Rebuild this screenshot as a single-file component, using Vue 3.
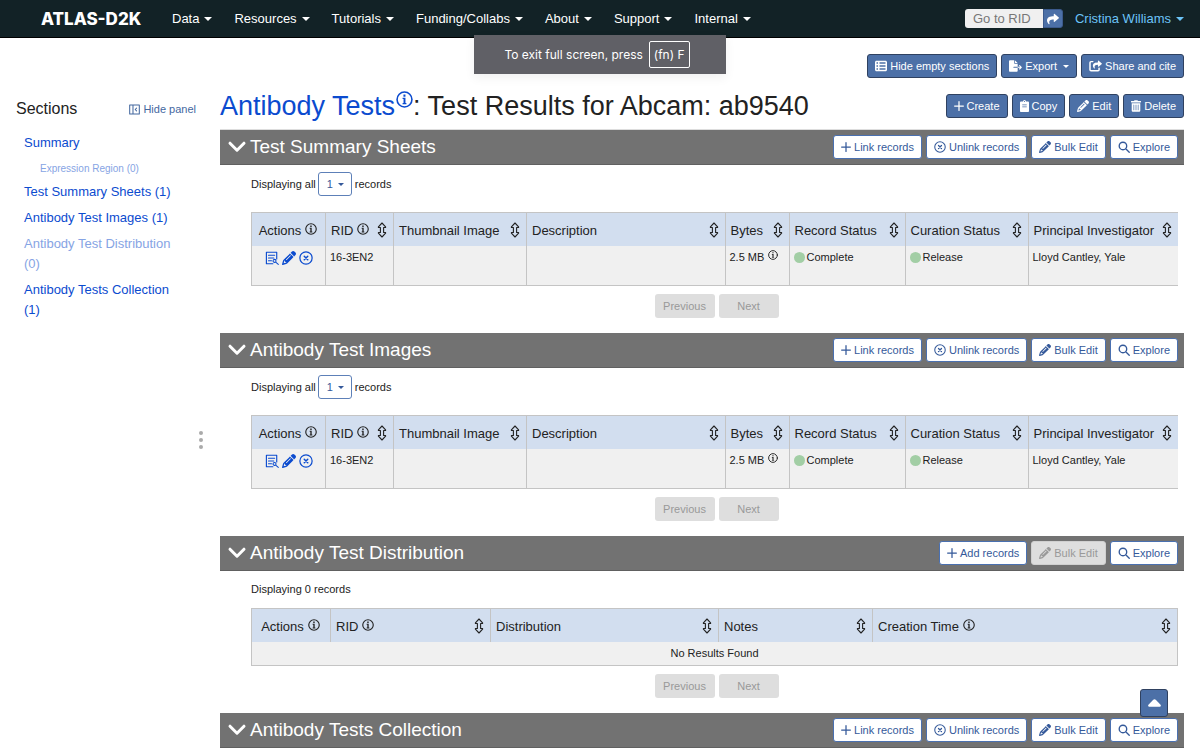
<script setup>
import { h, ref } from 'vue'

const line = (d, w = 1.5) => ({ d, fill: 'none', stroke: 'currentColor', 'stroke-width': w, 'stroke-linecap': 'round', 'stroke-linejoin': 'round' })
const solid = (d) => ({ d, fill: 'currentColor', 'fill-rule': 'evenodd' })
const shareArrow = 'M503.7 189.8L327.7 37.9C312.3 24.5 288 35.3 288 56v80C127.4 137.9 0 170.1 0 322.3c0 61.4 39.6 122.3 83.3 154.1 13.7 10 33.1-2.5 28.1-18.6C66 312.8 132.9 274.3 288 272v88c0 20.7 24.3 31.5 39.7 18.2l176-152c11-9.6 11-26.8 0-36.4z'

const icons = {
  list: ['0 0 512 512', [solid('M0 96C0 60.7 28.7 32 64 32H448c35.3 0 64 28.7 64 64V416c0 35.3-28.7 64-64 64H64c-35.3 0-64-28.7-64-64V96zm64 0v64h64V96H64zm384 0H192v64H448V96zM64 224v64h64V224H64zm384 0H192v64H448V224zM64 352v64h64V352H64zm384 0H192v64H448V352z')]],
  pencil: ['0 0 512 512', [solid('M410.3 231l11.3-11.3-33.9-33.9-62.1-62.1L291.7 89.8l-11.3 11.3-22.6 22.6L58.6 322.9c-10.4 10.4-18 23.3-22.2 37.4L1 480.7c-2.5 8.4-.2 17.5 6.1 23.7s15.3 8.5 23.7 6.1l120.3-35.4c14.1-4.2 27-11.8 37.4-22.2L387.7 253.7 410.3 231zM160 399.4l-9.1 22.7c-4 3.1-8.5 5.4-13.3 6.9L59.4 452l23-78.1c1.4-4.9 3.8-9.4 6.9-13.3l22.7-9.1v32c0 8.8 7.2 16 16 16h32zM362.7 18.7L348.3 33.2 325.7 55.8 314.3 67.1l33.9 33.9 62.1 62.1 33.9 33.9 11.3-11.3 22.6-22.6 14.5-14.5c25-25 25-65.5 0-90.5L453.3 18.7c-25-25-65.5-25-90.5 0zm-47.4 168l-144 144c-6.2 6.2-16.4 6.2-22.6 0s-6.2-16.4 0-22.6l144-144c6.2-6.2 16.4-6.2 22.6 0s6.2 16.4 0 22.6z')]],
  share: ['0 0 512 512', [solid(shareArrow)]],
  shareBox: ['0 0 576 512', [
    solid('M568 142L430 23c-15-12-34-3-34 15v60c-125 2-224 28-224 147 0 48 31 96 65 121 11 8 26-2 22-15-35-114 17-144 137-146v67c0 18 19 27 34 15l138-119c9-8 9-18 0-26z'),
    line('M170 62H90c-26 0-46 20-46 46v310c0 26 20 46 46 46h310c26 0 46-20 46-46v-58', 66)]],
  export: ['0 0 576 512', [solid('M0 48C0 21 21 0 48 0h176v128c0 18 14 32 32 32h128v128H216c-13 0-24 11-24 24s11 24 24 24h168v128c0 27-21 48-48 48H48c-27 0-48-21-48-48zM256 0l128 128H256zM384 336v-48h104l-36-36c-20-22 12-56 34-34l76 77c10 10 10 24 0 34l-76 77c-22 20-54-12-34-34l36-36z')]],
  plus: ['0 0 16 16', [line('M8 1v14M1 8h14', 2)]],
  clipboard: ['0 0 384 512', [solid('M336 64h-80a64 64 0 0 0-128 0H48C21 64 0 85 0 112v352c0 27 21 48 48 48h288c27 0 48-21 48-48V112c0-27-21-48-48-48zM192 40a24 24 0 1 1 0 48 24 24 0 0 1 0-48zM96 190h192v34H96zM96 278h192v34H96z')]],
  trash: ['0 0 448 512', [solid('M32 464a48 48 0 0 0 48 48h288a48 48 0 0 0 48-48V128H32zm272-256a16 16 0 0 1 32 0v224a16 16 0 0 1-32 0zm-96 0a16 16 0 0 1 32 0v224a16 16 0 0 1-32 0zm-96 0a16 16 0 0 1 32 0v224a16 16 0 0 1-32 0zM432 32H312l-9-19a24 24 0 0 0-22-13H167a24 24 0 0 0-21 13l-10 19H16A16 16 0 0 0 0 48v32a16 16 0 0 0 16 16h416a16 16 0 0 0 16-16V48a16 16 0 0 0-16-16z')]],
  search: ['0 0 16 16', [line('M11.6 6.6a5 5 0 1 1-10 0 5 5 0 0 1 10 0zM10.3 10.3L15 15', 1.8)]],
  circleX: ['0 0 16 16', [line('M15 8A7 7 0 1 1 1 8a7 7 0 0 1 14 0z', 1.4), line('M6 6l4 4M10 6l-4 4', 1.7)]],
  info: ['0 0 16 16', [line('M15 8A7 7 0 1 1 1 8a7 7 0 0 1 14 0z', 1.5), solid('M6.200 6.400h2.700v5h.9v1.100H6.200v-1.100h.9V7.500h-.9zM7 3.400h1.900v1.900H7z')]],
  sort: ['0 0 10 16', [line('M5 1L1.4 4.800v.7h2v5h-2v.7L5 15l3.600-3.800v-.7h-2v-5h2v-.7z', 1.1)]],
  chevron: ['0 0 18 12', [line('M2 2.2l7 7 7-7', 3)]],
  view: ['0 0 16 16', [line('M9 14.600H1.600V1.400h11.800V9M4 4.800h7M4 8h6M4 11.200h3.400', 1.3), line('M12.600 11.300a1.700 1.700 0 1 1-3.400 0 1.700 1.700 0 0 1 3.400 0zM12.200 12.700l3 2.600', 1.2)]],
  panel: ['0 0 16 16', [line('M1 1.500h14v13H1zM5.800 1.500v13', 1.5), line('M11 6L9 8l2 2', 1.5)]],
  up: ['0 0 14 8', [solid('M7 0c.5 0 1 .2 1.300 .5l5.200 5.500c.8.900.4 2-.9 2H1.400C.1 8-.3 6.900.5 6L5.700.5C6 .2 6.500 0 7 0z')]],
}
const Icon = ({ name }) => h('svg', { class: ['icon', 'i-' + name], viewBox: icons[name][0], 'aria-hidden': 'true' }, icons[name][1].map((p) => h('path', p)))

const menus = ['Data', 'Resources', 'Tutorials', 'Funding/Collabs', 'About', 'Support', 'Internal']
const rid = ref('')

const contents = [
  { label: 'Summary' },
  { label: 'Expression Region (0)', empty: true, small: true },
  { label: 'Test Summary Sheets (1)' },
  { label: 'Antibody Test Images (1)' },
  { label: 'Antibody Test Distribution (0)', empty: true },
  { label: 'Antibody Tests Collection (1)' },
]

const linkTools = [
  { icon: 'plus', label: 'Link records' },
  { icon: 'circleX', label: 'Unlink records' },
  { icon: 'pencil', label: 'Bulk Edit' },
  { icon: 'search', label: 'Explore' },
]
const addTools = [
  { icon: 'plus', label: 'Add records' },
  { icon: 'pencil', label: 'Bulk Edit', disabled: true },
  { icon: 'search', label: 'Explore' },
]
const fileColumns = [
  { name: 'Actions', info: true, key: 'actions' },
  { name: 'RID', info: true, sort: true, key: 'rid' },
  { name: 'Thumbnail Image', sort: true, key: 'thumb' },
  { name: 'Description', sort: true, key: 'desc' },
  { name: 'Bytes', sort: true, key: 'bytes' },
  { name: 'Record Status', sort: true, key: 'record' },
  { name: 'Curation Status', sort: true, key: 'curation' },
  { name: 'Principal Investigator', sort: true, key: 'pi' },
]
const distributionColumns = [
  { name: 'Actions', info: true, key: 'actions' },
  { name: 'RID', info: true, sort: true, key: 'rid' },
  { name: 'Distribution', sort: true, key: 'dist' },
  { name: 'Notes', sort: true, key: 'notes' },
  { name: 'Creation Time', info: true, sort: true, key: 'time' },
]
const row = { rid: '16-3EN2', bytes: '2.5 MB', record: 'Complete', curation: 'Release', pi: 'Lloyd Cantley, Yale' }

const sections = [
  { id: 'sheets', title: 'Test Summary Sheets', tools: linkTools, columns: fileColumns, rows: [row] },
  { id: 'images', title: 'Antibody Test Images', tools: linkTools, columns: fileColumns, rows: [row] },
  { id: 'distribution', title: 'Antibody Test Distribution', tools: addTools, columns: distributionColumns, rows: [] },
  { id: 'collection', title: 'Antibody Tests Collection', tools: linkTools, columns: null, rows: [] },
]
</script>

<template>
  <div class="page">
    <header class="navbar">
      <a class="brand" href="#">ATLAS-D2K</a>
      <nav class="menus">
        <a v-for="m in menus" :key="m" href="#">{{ m }}<span class="caret"></span></a>
      </nav>
      <form class="goto" @submit.prevent>
        <input v-model="rid" type="text" placeholder="Go to RID" aria-label="Go to RID">
        <button type="submit" aria-label="Go"><Icon name="share" /></button>
      </form>
      <a class="user" href="#">Cristina Williams<span class="caret"></span></a>
    </header>

    <div class="notice">To exit full screen, press <kbd>(fn) F</kbd></div>

    <div class="body">
      <aside class="sidebar">
        <div class="side-head">
          <h2>Sections</h2>
          <button class="hide-panel" type="button"><Icon name="panel" />Hide panel</button>
        </div>
        <ul>
          <li v-for="c in contents" :key="c.label" :class="{ empty: c.empty, small: c.small }"><a href="#">{{ c.label }}</a></li>
        </ul>
      </aside>
      <div class="splitter"><i></i><i></i><i></i></div>

      <main class="main">
        <div class="top-actions">
          <button class="btn primary" type="button"><Icon name="list" />Hide empty sections</button>
          <button class="btn primary" type="button"><Icon name="export" />Export<span class="caret"></span></button>
          <button class="btn primary" type="button"><Icon name="shareBox" />Share and cite</button>
        </div>
        <div class="title-row">
          <h1><a href="#">Antibody Tests<Icon name="info" /></a>: Test Results for Abcam: ab9540</h1>
          <div class="group">
            <button class="btn primary" type="button"><Icon name="plus" />Create</button>
            <button class="btn primary" type="button"><Icon name="clipboard" />Copy</button>
            <button class="btn primary" type="button"><Icon name="pencil" />Edit</button>
            <button class="btn primary" type="button"><Icon name="trash" />Delete</button>
          </div>
        </div>

        <section v-for="s in sections" :key="s.id">
          <div class="section-head">
            <h2><Icon name="chevron" />{{ s.title }}</h2>
            <div class="group tools">
              <button v-for="t in s.tools" :key="t.label" class="btn" type="button" :disabled="t.disabled"><Icon :name="t.icon" />{{ t.label }}</button>
            </div>
          </div>
          <div v-if="s.columns" class="section-body">
            <div v-if="s.rows.length" class="count">
              <label :for="s.id + '-size'">Displaying all</label>
              <span class="size">
                <select :id="s.id + '-size'"><option>1</option></select>
                <span class="caret"></span>
              </span>
              records
            </div>
            <div v-else class="count none">Displaying 0 records</div>

            <table :class="{ wide: s.rows.length, blank: !s.rows.length }">
              <thead>
                <tr>
                  <th v-for="c in s.columns" :key="c.key" :class="'c-' + c.key" scope="col">
                    <div class="th"><span>{{ c.name }}<Icon v-if="c.info" name="info" /></span><Icon v-if="c.sort" name="sort" /></div>
                  </th>
                </tr>
              </thead>
              <tbody>
                <tr v-for="r in s.rows" :key="r.rid">
                  <td class="acts">
                    <div>
                      <button type="button" aria-label="View"><Icon name="view" /></button>
                      <button type="button" aria-label="Edit"><Icon name="pencil" /></button>
                      <button type="button" aria-label="Unlink"><Icon name="circleX" /></button>
                    </div>
                  </td>
                  <td>{{ r.rid }}</td>
                  <td></td>
                  <td></td>
                  <td>{{ r.bytes }}<Icon name="info" /></td>
                  <td><span class="dot"></span>{{ r.record }}</td>
                  <td><span class="dot"></span>{{ r.curation }}</td>
                  <td>{{ r.pi }}</td>
                </tr>
                <tr v-if="!s.rows.length"><td class="no-results" :colspan="s.columns.length">No Results Found</td></tr>
              </tbody>
            </table>
            <div class="pager">
              <button type="button" disabled>Previous</button>
              <button type="button" disabled>Next</button>
            </div>
          </div>
        </section>
      </main>
    </div>
    <button class="to-top" type="button" aria-label="Scroll to top"><Icon name="up" /></button>
  </div>
</template>

<style>
body { margin: 0; background: #fff; }
</style>

<style scoped>
* { box-sizing: border-box; }
.page {
  position: relative;
  display: flex;
  flex-direction: column;
  height: 100vh;
  overflow: hidden;
  font-family: "Liberation Sans", Arial, sans-serif;
  font-size: 11px;
  color: #222;
}
a { color: #0b4bcf; text-decoration: none; }
button, input, select { font: inherit; margin: 0; }
h1, h2 { margin: 0; font-weight: 400; }
.icon { display: inline-block; width: 12px; height: 12px; flex: none; overflow: visible; }
.caret {
  display: inline-block;
  border: 3px solid transparent;
  border-top-color: currentColor;
  border-bottom: 0;
  margin-left: 7px;
  vertical-align: 2px;
}

.navbar {
  display: flex;
  align-items: center;
  flex: none;
  height: 38px;
  padding: 0 16px 0 41px;
  background: #122226;
  border-bottom: 1px solid #000;
  font-size: 13px;
}
.navbar .caret { border-width: 4px 4px 0; margin-left: 5px; }
.brand { width: 131px; color: #fff; font: 800 17px/20px Inter, sans-serif; }
.menus { display: flex; gap: 22px; flex: 1; }
.menus a { color: #fff; white-space: nowrap; }
.goto { display: flex; height: 19px; margin-right: 12px; }
.goto input {
  width: 78px;
  padding: 0 8px;
  border: 0;
  border-radius: 3px 0 0 3px;
  background: #f0f0f0;
  color: #777;
}
.goto input::placeholder { color: #777; opacity: 1; }
.goto button {
  display: flex;
  align-items: center;
  justify-content: center;
  width: 20px;
  padding: 0;
  border: 1px solid #3c5a8c;
  border-radius: 0 3px 3px 0;
  background: #4c70a7;
  color: #fff;
}
.user { color: #6cc4f8; white-space: nowrap; }

.notice {
  position: absolute;
  top: 35px;
  left: 50%;
  z-index: 2;
  display: flex;
  align-items: center;
  justify-content: center;
  gap: 6px;
  width: 252px;
  height: 39px;
  margin-left: -126px;
  padding-right: 6px;
  background: #606066;
  color: #fff;
  font: 12px Inter, sans-serif;
  white-space: nowrap;
  box-shadow: 0 4px 10px rgba(0, 0, 0, .06);
}
.notice kbd { padding: 5px 4px; border: 1px solid #fff; border-radius: 2px; font: inherit; }

.body { display: flex; flex: 1; min-height: 0; }
.sidebar { width: 196px; flex: none; padding: 60px 0 0 16px; }
.side-head { display: flex; align-items: center; justify-content: space-between; height: 22px; }
.side-head h2 { font-size: 16px; }
.hide-panel {
  display: flex;
  align-items: center;
  gap: 3px;
  padding: 0;
  border: 0;
  background: none;
  color: #44689f;
}
.hide-panel .icon { width: 11px; height: 11px; }
.sidebar ul { list-style: none; margin: 13px 0 0; padding: 0 8px; font-size: 13px; line-height: 20px; }
.sidebar li { margin-bottom: 6px; }
.sidebar li.small { margin-bottom: 3px; padding-left: 16px; font-size: 10px; }
.sidebar li.empty a { color: #86a4e4; }
.splitter {
  display: flex;
  flex-direction: column;
  align-items: center;
  justify-content: center;
  gap: 3px;
  width: 10px;
  flex: none;
  margin: 92px 14px 0 0;
}
.splitter i { width: 4px; height: 4px; border-radius: 50%; background: #aaa; }

.main { flex: 1; min-width: 0; padding: 16px 16px 0 0; }
.top-actions { display: flex; justify-content: flex-end; gap: 4px; }
.group { display: flex; gap: 4px; }
.btn {
  display: flex;
  align-items: center;
  gap: 3px;
  height: 24px;
  padding: 0 7px;
  border: 1px solid #4a70b0;
  border-radius: 3px;
  background: #fff;
  color: #34599a;
  white-space: nowrap;
}
.btn.primary { background: #4c70a7; border-color: #2f4160; color: #fff; }
.btn:disabled { background: #dedede; border-color: #d0d0d0; color: #999; }
.btn .caret { margin-left: 3px; vertical-align: 0; }
.i-export { width: 13px; }
.i-shareBox { width: 13px; }
.i-clipboard { width: 9px; }
.i-trash { width: 10px; }
.btn .i-plus { width: 10px; height: 10px; }

.title-row {
  display: flex;
  align-items: flex-end;
  justify-content: space-between;
  height: 52px;
  padding-bottom: 11px;
  border-bottom: 1px solid #ddd;
}
.title-row h1 { font-size: 27px; line-height: 24px; white-space: nowrap; }
.title-row h1 .icon { width: 17px; height: 17px; margin-left: 1px; vertical-align: 7px; }

.section-head {
  display: flex;
  align-items: center;
  justify-content: space-between;
  height: 35px;
  padding: 0 6px 0 8px;
  background: #727272;
  border-bottom: 1px solid #606060;
  color: #fff;
}
.section-head h2 { display: flex; align-items: center; gap: 4px; font-size: 19px; }
.i-chevron { width: 18px; }
.section-body { padding: 7px 6px 15px 31px; }
.count { display: flex; align-items: center; gap: 3px; height: 24px; margin-bottom: 16px; }
.count label { margin-right: -1px; }
.count.none { height: 22px; margin-bottom: 8px; }
.size { position: relative; }
.size select {
  appearance: none;
  width: 34px;
  height: 24px;
  padding: 0 8px;
  border: 1px solid #5d80b8;
  border-radius: 3px;
  background: #fff;
  color: #34599a;
}
.size .caret { position: absolute; right: 8px; top: 11px; color: #34599a; pointer-events: none; }

table { width: 100%; table-layout: fixed; border-collapse: collapse; border: 1px solid #c4c4c4; }
table.wide { border-right: 0; }
th, td { border-left: 1px solid #c4c4c4; text-align: left; font-weight: 400; }
th { height: 33px; padding: 2px 6px 0 5px; background: #d2deef; font-size: 13px; white-space: nowrap; }
.th { display: flex; align-items: center; justify-content: space-between; }
.th .i-info, td .i-info { margin-left: 4px; vertical-align: 0; }
.i-sort { width: 10px; height: 16px; }
.c-actions .th { justify-content: center; }
td { height: 40px; padding: 4px; background: #f0f0f0; vertical-align: top; line-height: 15px; white-space: nowrap; }
td .i-info { width: 10px; height: 10px; vertical-align: 1px; }
.acts div { display: flex; justify-content: center; gap: 3px; }
.acts button { display: flex; padding: 1px 0; border: 0; background: none; color: #0b4bcf; }
.acts .icon { width: 14px; height: 14px; }
.wide .c-actions { width: 74px; }
.wide .c-rid { width: 68px; }
.c-thumb { width: 133px; }
.c-bytes { width: 64px; }
.c-record { width: 116px; }
.c-curation { width: 123px; }
.c-pi { width: 150px; }
.blank .c-actions { width: 79px; }
.blank .c-rid { width: 160px; }
.c-dist { width: 228px; }
.c-notes { width: 154px; }
.dot { display: inline-block; width: 11px; height: 11px; margin-right: 2px; border-radius: 50%; background: #a2cea5; vertical-align: -2px; }
.blank td { height: 24px; text-align: center; }

.pager { display: flex; justify-content: center; gap: 4px; margin-top: 8px; padding-left: 4px; }
.pager button { width: 60px; height: 24px; padding: 0; border: 0; border-radius: 3px; background: #dedede; color: #999; }

.to-top {
  position: absolute;
  right: 32px;
  bottom: 32px;
  display: flex;
  align-items: center;
  justify-content: center;
  width: 28px;
  height: 28px;
  padding: 0;
  border: 1px solid #2f4160;
  border-radius: 3px;
  background: #4c70a7;
  color: #fff;
}
.i-up { width: 13px; height: 8px; }
</style>
